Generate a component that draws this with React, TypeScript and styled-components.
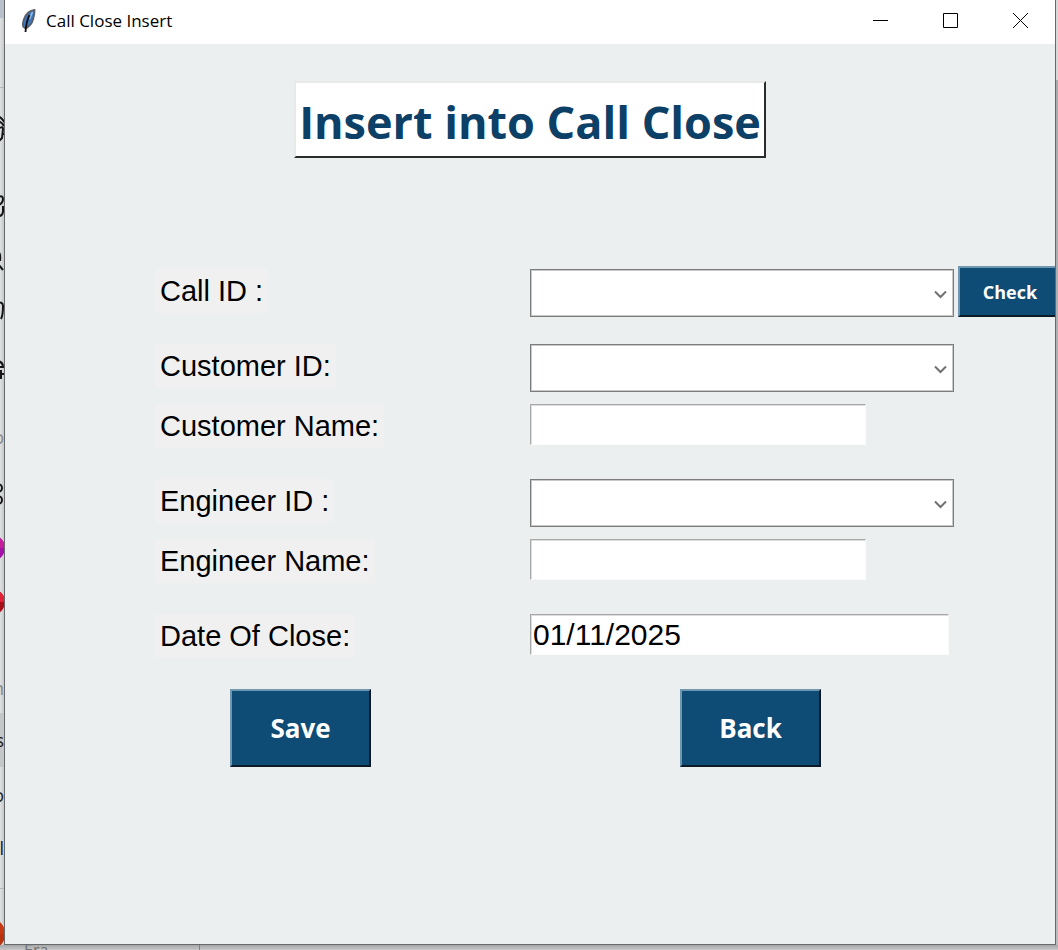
import React from "react";
import styled, { createGlobalStyle } from "styled-components";

const ui = `"Open Sans", "Noto Sans", sans-serif`;
const arial = `"Liberation Sans", Arial, sans-serif`;

const GlobalStyle = createGlobalStyle`
  * { box-sizing: border-box; }
  body { margin: 0; background: #c4c6c7; }
`;

const Desktop = styled.div`
  display: grid;
  grid-template-columns: 4px minmax(0, 1fr) 2px;
  grid-template-rows: minmax(0, 1fr) 5px;
  min-height: 100vh;
  overflow: hidden;
`;

const Sidebar = styled.aside`
  display: flex;
  flex-direction: column;
  overflow: hidden;
  height: 0;
  min-height: 100%;
  background: linear-gradient(to right, #dfe1e3, #c6c8ca);
`;

const SideCell = styled.div<{ $h: number; $bg?: string; $line?: boolean }>`
  flex: none;
  display: flex;
  align-items: center;
  justify-content: flex-end;
  height: ${(p) => p.$h}px;
  background: ${(p) => p.$bg ?? "transparent"};
  border-bottom: ${(p) => (p.$line ? "1px solid #b4b6b8" : "none")};
  svg { flex: none; }
`;

const SideText = styled.span<{ $muted?: boolean }>`
  font: 18px/24px ${ui};
  color: ${(p) => (p.$muted ? "#888" : "#1c1c1c")};
`;

const RightEdge = styled.div`
  background: linear-gradient(to bottom, #d8d8d8 80px, #a9abac 80px, #b9bbbc);
`;

const BottomEdge = styled.footer`
  grid-column: 1 / -1;
  display: flex;
  overflow: hidden;
  height: 5px;
  background: linear-gradient(to bottom, #a4a6a7, #c6c8c9);
`;

const BottomLeft = styled.div`
  width: 200px;
  padding-left: 24px;
  border-right: 1px solid #808283;
  font: 16px/10px ${ui};
  color: #707274;
`;

const Window = styled.main`
  display: flex;
  flex-direction: column;
  min-width: 0;
  overflow: hidden;
  background: #ebeff0;
  border: 1px solid #66696a;
  border-top: 0;
`;

const TitleBar = styled.header`
  display: flex;
  align-items: center;
  height: 44px;
  padding: 0 0 3px 16px;
  background: #fff;
`;

const WindowTitle = styled.span`
  flex: 1;
  padding-left: 10px;
  font: 17px/24px ${ui};
  color: #000;
`;

const CaptionButton = styled.button`
  display: flex;
  align-items: center;
  justify-content: center;
  width: 70px;
  height: 40px;
  padding: 0;
  border: 0;
  background: transparent;
`;

const Heading = styled.h1`
  align-self: center;
  margin: 37px 0 0;
  padding: 0 3px;
  height: 77px;
  background: #fff;
  border: 2px solid #e9e9e9;
  border-right-color: #2b2b2b;
  border-bottom-color: #2b2b2b;
  font: bold 45px/78px ${ui};
  color: #0c4066;
  white-space: nowrap;
`;

const Form = styled.form`
  display: flex;
  flex-direction: column;
  margin-top: 111px;
`;

const Row = styled.div<{ $tight?: boolean }>`
  display: grid;
  grid-template-columns: 371px 424px 104px;
  column-gap: 4px;
  align-items: start;
  height: ${(p) => (p.$tight ? 60 : 75)}px;
  padding-left: 150px;
`;

const Label = styled.label`
  justify-self: start;
  height: 44px;
  padding: 0 5px;
  background: #f0f0f0;
  font: 29px/45px ${arial};
  color: #000;
  white-space: nowrap;
`;

const Combo = styled.div`
  position: relative;
  height: 48px;
  svg {
    position: absolute;
    right: 6px;
    top: 20px;
    pointer-events: none;
  }
`;

const Select = styled.select`
  appearance: none;
  width: 100%;
  height: 48px;
  padding: 0 32px 0 6px;
  border: 1px solid #7c7c7c;
  outline: 0;
  border-radius: 0;
  background: #fff;
  box-shadow: inset 0 0 0 1px #c8c8c8;
  font: 29px/44px ${arial};
`;

const Entry = styled.input<{ $w: number }>`
  width: ${(p) => p.$w}px;
  height: 41px;
  padding: 0 2px;
  border: 1px solid #fafafa;
  border-top-color: #a8a8a8;
  border-left-color: #a8a8a8;
  border-radius: 0;
  background: #fff;
  box-shadow: inset 1px 1px 0 #dcdcdc;
  font: 30px/38px ${arial};
  color: #000;
`;

const PushButton = styled.button`
  width: 141px;
  height: 78px;
  padding: 0;
  border: 2px solid;
  border-color: #6f98b0 #0b1a26 #0b1a26 #6f98b0;
  background: #0e4b75;
  color: #fff;
  font: bold 26px/36px ${ui};
`;

const CheckButton = styled(PushButton)`
  width: 104px;
  height: 51px;
  margin-top: -3px;
  font-size: 18px;
  line-height: 24px;
`;

const Actions = styled.div`
  display: flex;
  gap: 309px;
  padding-left: 225px;
`;

const Feather = () => (
  <svg width="15" height="25" viewBox="0 0 15 25" aria-hidden="true">
    <path d="M13.500 2C9 2.500 5 6 3 11c-1.300 3.500-1.500 6-.5 8l2 1.500c4-2 6.500-5 7.500-9 .8-3 1.800-6 1.500-9.500z" fill="#3f79bd" stroke="#59606a" strokeWidth="1.800" />
    <path d="M11.500 4 8.500 11" stroke="#8fc0f0" strokeWidth="1.600" />
    <path d="M8.500 7C6 12 5 16 4.500 24" fill="none" stroke="#111" strokeWidth="1.800" />
  </svg>
);

const Glyph = ({ d }: { d: string }) => (
  <svg width="24" height="28" viewBox="0 0 24 28" fill="none" stroke="#161616" strokeWidth="2" aria-hidden="true">
    <path d={d} />
  </svg>
);

const Ball = ({ color, shade, r }: { color: string; shade: string; r: number }) => (
  <svg width={r * 2} height={r * 2} viewBox="0 0 28 28" aria-hidden="true">
    <circle cx="15" cy="14" r="14" fill={shade} />
    <path d="M1 14a14 14 0 0 1 28 0z" fill={color} />
  </svg>
);

const ComboBox = ({ id }: { id: string }) => (
  <Combo>
    <Select id={id} defaultValue="">
      <option value="" />
    </Select>
    <svg width="15" height="10" viewBox="0 0 15 10" fill="none" stroke="#707070" strokeWidth="2" aria-hidden="true">
      <path d="M2 2.500 7.500 8 13 2.500" />
    </svg>
  </Combo>
);

export default function App() {
  return (
    <>
      <GlobalStyle />
      <Desktop>
        <Sidebar>
          <SideCell $h={18} $bg="#b8c0c9" />
          <SideCell $h={70} $line />
          <SideCell $h={80}><Glyph d="M18 2q4 2 8 8M18 7q4 1 6 5M20 14q3-2 3 1l-1 9-3 3M22 20h4" /></SideCell>
          <SideCell $h={76}><Glyph d="M18 5q5-2 5 2 0 4-4 6M23 14v6q-1 5-6 4" /></SideCell>
          <SideCell $h={36}><Glyph d="M18 4q3 1 2 9M18 16l5 6" /></SideCell>
          <SideCell $h={60}><Glyph d="M16 7q7-2 7 3 0 9-2 13" /></SideCell>
          <SideCell $h={60}><Glyph d="M16 5q7 0 7 6h-7M16 18h8M21 14v9" /></SideCell>
          <SideCell $h={74}><SideText $muted>o</SideText></SideCell>
          <SideCell $h={40}><Glyph d="M18 4a4 4 0 1 1 0 8M18 16a4 4 0 1 1 0 8" /></SideCell>
          <SideCell $h={68}><Ball color="#c41e9c" shade="#a411a8" r={13} /></SideCell>
          <SideCell $h={40}><Ball color="#df2335" shade="#a80d18" r={13} /></SideCell>
          <SideCell $h={41} />
          <SideCell $h={50}><SideText $muted>n</SideText></SideCell>
          <SideCell $h={54} $bg="#c4c6c7"><SideText>s</SideText></SideCell>
          <SideCell $h={56}><SideText>o</SideText></SideCell>
          <SideCell $h={50}><SideText>ol</SideText></SideCell>
          <SideCell $h={16} $line />
          <SideCell $h={90}><Ball color="#c53a12" shade="#b9330e" r={16} /></SideCell>
        </Sidebar>
        <Window>
          <TitleBar>
            <Feather />
            <WindowTitle>Call Close Insert</WindowTitle>
            <CaptionButton type="button" aria-label="Minimize">
              <svg width="15" height="15" stroke="#000" fill="none"><path d="M0 7.500h15" /></svg>
            </CaptionButton>
            <CaptionButton type="button" aria-label="Maximize">
              <svg width="15" height="15" stroke="#000" fill="none"><path d="M.5.5h14v14H.5z" /></svg>
            </CaptionButton>
            <CaptionButton type="button" aria-label="Close">
              <svg width="15" height="15" stroke="#000" fill="none"><path d="m0 0 15 15M15 0 0 15" /></svg>
            </CaptionButton>
          </TitleBar>
          <Heading>Insert into Call Close</Heading>
          <Form onSubmit={(e) => e.preventDefault()}>
            <Row>
              <Label htmlFor="call-id">Call ID :</Label>
              <ComboBox id="call-id" />
              <CheckButton type="button">Check</CheckButton>
            </Row>
            <Row $tight>
              <Label htmlFor="customer-id">Customer ID:</Label>
              <ComboBox id="customer-id" />
            </Row>
            <Row>
              <Label htmlFor="customer-name">Customer Name:</Label>
              <Entry id="customer-name" $w={336} />
            </Row>
            <Row $tight>
              <Label htmlFor="engineer-id">Engineer ID :</Label>
              <ComboBox id="engineer-id" />
            </Row>
            <Row>
              <Label htmlFor="engineer-name">Engineer Name:</Label>
              <Entry id="engineer-name" $w={336} />
            </Row>
            <Row>
              <Label htmlFor="close-date">Date Of Close:</Label>
              <Entry id="close-date" $w={419} defaultValue="01/11/2025" />
            </Row>
            <Actions>
              <PushButton type="submit">Save</PushButton>
              <PushButton type="button">Back</PushButton>
            </Actions>
          </Form>
        </Window>
        <RightEdge />
        <BottomEdge>
          <BottomLeft>Era</BottomLeft>
        </BottomEdge>
      </Desktop>
    </>
  );
}
